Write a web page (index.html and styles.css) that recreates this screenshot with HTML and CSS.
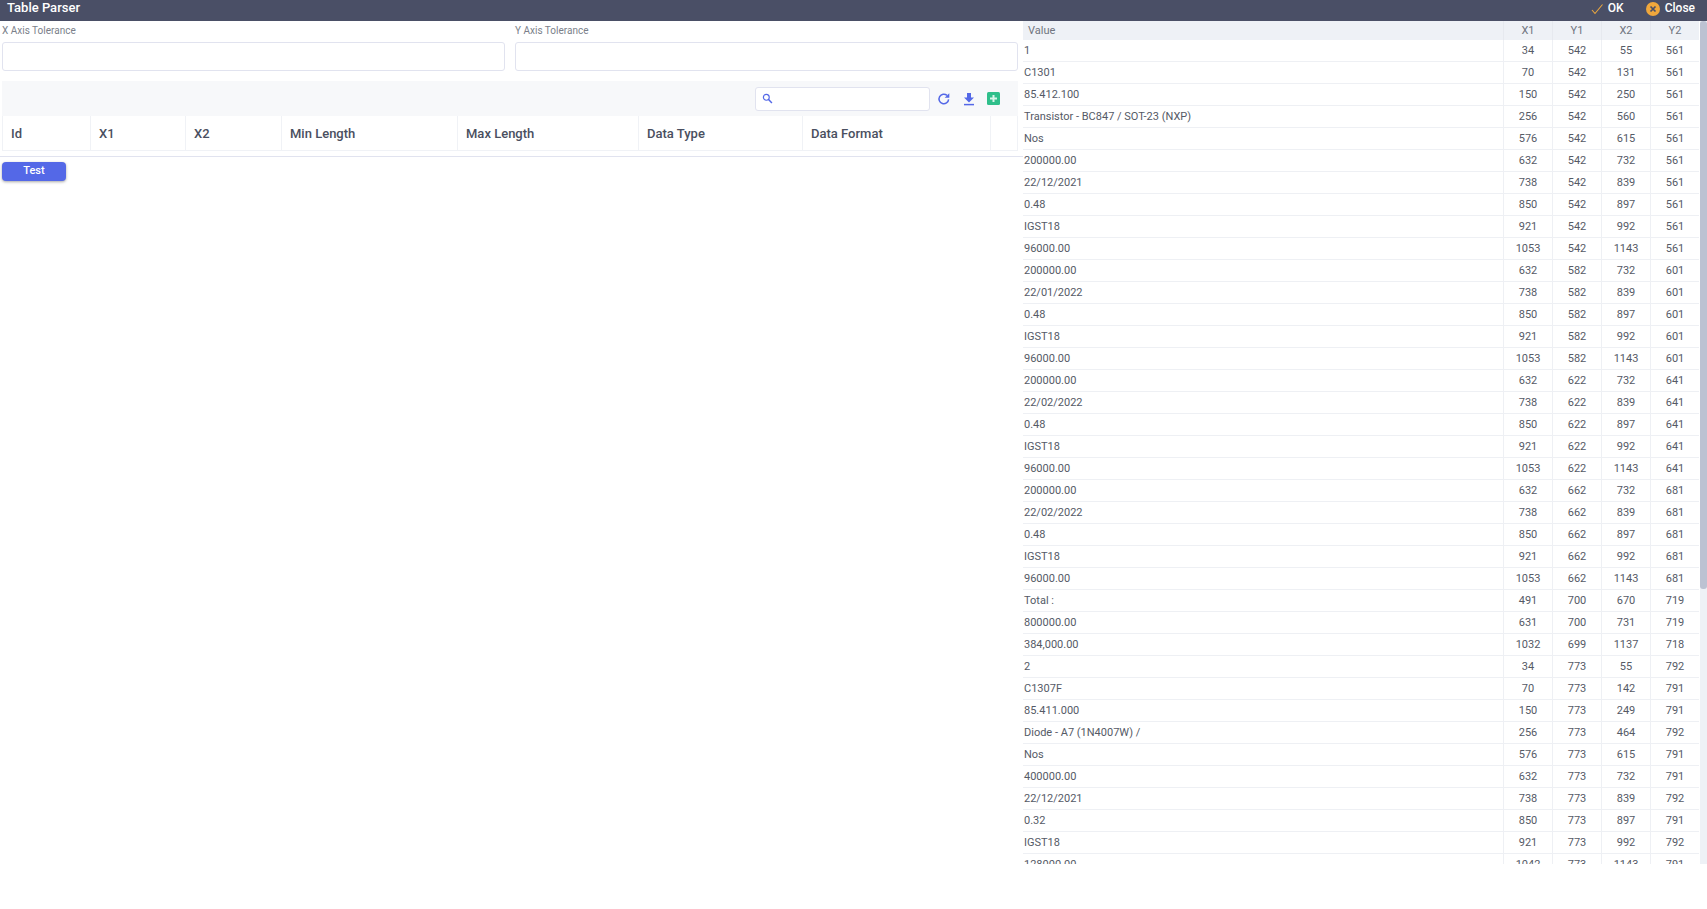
FILE: index.html
```html
<!DOCTYPE html>
<html lang="en">
<head>
<meta charset="utf-8">
<title>Table Parser</title>
<link rel="stylesheet" href="styles.css">
</head>
<body>
<div class="app">
  <header class="topbar">
    <h1 class="title">Table Parser</h1>
    <div class="actions">
      <button class="action" type="button">
        <svg class="ok-icon" viewBox="0 0 12 12" width="12" height="12"><path d="M1 7l3 3.5L11.5 1.5" fill="none" stroke="#eba73f" stroke-width="1.1"/></svg>
        <span>OK</span>
      </button>
      <button class="action" type="button">
        <svg viewBox="0 0 14 14" width="14" height="14"><circle cx="7" cy="7" r="7" fill="#f0a73c"/><path d="M4.5 4.5l5 5M9.5 4.5l-5 5" stroke="#4a4f66" stroke-width="1.7"/></svg>
        <span>Close</span>
      </button>
    </div>
  </header>
  <main class="main">
    <section class="left">
      <div class="fields">
        <label class="field"><span class="field-label">X Axis Tolerance</span><input class="field-input" type="text"></label>
        <label class="field"><span class="field-label">Y Axis Tolerance</span><input class="field-input" type="text"></label>
      </div>
      <div class="grid-wrap">
        <div class="toolbar">
          <div class="search">
            <svg viewBox="0 0 12 12" width="11" height="11"><circle cx="4.7" cy="4.7" r="3.2" fill="none" stroke="#5468e7" stroke-width="1.3"/><path d="M7.2 7.2l3.6 3.6" stroke="#5468e7" stroke-width="1.6"/></svg>
          </div>
          <svg class="tool" viewBox="0 0 14 14" width="14" height="14"><path d="M11.6 7.4A4.8 4.8 0 1 1 10 3.4" fill="none" stroke="#5468e7" stroke-width="1.5"/><path d="M12.3 1.2v4.6H7.7z" fill="#5468e7"/></svg>
          <svg class="tool" viewBox="0 0 14 14" width="14" height="14"><path d="M5 1h4v4.5h3L7 10.5 2 5.5h3z" fill="#5468e7"/><path d="M2 12.6h10" stroke="#5468e7" stroke-width="1.5"/></svg>
          <svg class="tool" viewBox="0 0 13 13" width="13" height="13"><rect width="13" height="13" rx="1.5" fill="#2fbf8b"/><path d="M6.5 3v7M3 6.5h7" stroke="#d9f5ea" stroke-width="2"/></svg>
        </div>
        <div class="grid-head">
          <div class="col">Id</div>
          <div class="col">X1</div>
          <div class="col">X2</div>
          <div class="col">Min Length</div>
          <div class="col">Max Length</div>
          <div class="col">Data Type</div>
          <div class="col">Data Format</div>
          <div class="col"></div>
        </div>
      </div>
      <div class="rule"></div>
      <button class="test" type="button">Test</button>
    </section>
    <section class="right">
      <div class="scroller">
      <table class="data">
        <thead><tr><th>Value</th><th>X1</th><th>Y1</th><th>X2</th><th>Y2</th></tr></thead>
        <tbody>
          <tr><td>1</td><td>34</td><td>542</td><td>55</td><td>561</td></tr>
          <tr><td>C1301</td><td>70</td><td>542</td><td>131</td><td>561</td></tr>
          <tr><td>85.412.100</td><td>150</td><td>542</td><td>250</td><td>561</td></tr>
          <tr><td>Transistor - BC847 / SOT-23 (NXP)</td><td>256</td><td>542</td><td>560</td><td>561</td></tr>
          <tr><td>Nos</td><td>576</td><td>542</td><td>615</td><td>561</td></tr>
          <tr><td>200000.00</td><td>632</td><td>542</td><td>732</td><td>561</td></tr>
          <tr><td>22/12/2021</td><td>738</td><td>542</td><td>839</td><td>561</td></tr>
          <tr><td>0.48</td><td>850</td><td>542</td><td>897</td><td>561</td></tr>
          <tr><td>IGST18</td><td>921</td><td>542</td><td>992</td><td>561</td></tr>
          <tr><td>96000.00</td><td>1053</td><td>542</td><td>1143</td><td>561</td></tr>
          <tr><td>200000.00</td><td>632</td><td>582</td><td>732</td><td>601</td></tr>
          <tr><td>22/01/2022</td><td>738</td><td>582</td><td>839</td><td>601</td></tr>
          <tr><td>0.48</td><td>850</td><td>582</td><td>897</td><td>601</td></tr>
          <tr><td>IGST18</td><td>921</td><td>582</td><td>992</td><td>601</td></tr>
          <tr><td>96000.00</td><td>1053</td><td>582</td><td>1143</td><td>601</td></tr>
          <tr><td>200000.00</td><td>632</td><td>622</td><td>732</td><td>641</td></tr>
          <tr><td>22/02/2022</td><td>738</td><td>622</td><td>839</td><td>641</td></tr>
          <tr><td>0.48</td><td>850</td><td>622</td><td>897</td><td>641</td></tr>
          <tr><td>IGST18</td><td>921</td><td>622</td><td>992</td><td>641</td></tr>
          <tr><td>96000.00</td><td>1053</td><td>622</td><td>1143</td><td>641</td></tr>
          <tr><td>200000.00</td><td>632</td><td>662</td><td>732</td><td>681</td></tr>
          <tr><td>22/02/2022</td><td>738</td><td>662</td><td>839</td><td>681</td></tr>
          <tr><td>0.48</td><td>850</td><td>662</td><td>897</td><td>681</td></tr>
          <tr><td>IGST18</td><td>921</td><td>662</td><td>992</td><td>681</td></tr>
          <tr><td>96000.00</td><td>1053</td><td>662</td><td>1143</td><td>681</td></tr>
          <tr><td>Total :</td><td>491</td><td>700</td><td>670</td><td>719</td></tr>
          <tr><td>800000.00</td><td>631</td><td>700</td><td>731</td><td>719</td></tr>
          <tr><td>384,000.00</td><td>1032</td><td>699</td><td>1137</td><td>718</td></tr>
          <tr><td>2</td><td>34</td><td>773</td><td>55</td><td>792</td></tr>
          <tr><td>C1307F</td><td>70</td><td>773</td><td>142</td><td>791</td></tr>
          <tr><td>85.411.000</td><td>150</td><td>773</td><td>249</td><td>791</td></tr>
          <tr><td>Diode - A7 (1N4007W) /</td><td>256</td><td>773</td><td>464</td><td>792</td></tr>
          <tr><td>Nos</td><td>576</td><td>773</td><td>615</td><td>791</td></tr>
          <tr><td>400000.00</td><td>632</td><td>773</td><td>732</td><td>791</td></tr>
          <tr><td>22/12/2021</td><td>738</td><td>773</td><td>839</td><td>792</td></tr>
          <tr><td>0.32</td><td>850</td><td>773</td><td>897</td><td>791</td></tr>
          <tr><td>IGST18</td><td>921</td><td>773</td><td>992</td><td>792</td></tr>
          <tr><td>128000.00</td><td>1042</td><td>773</td><td>1143</td><td>791</td></tr>
        </tbody>
      </table>
      </div>
      <div class="scrollbar"><div class="thumb"></div></div>
    </section>
  </main>
</div>
</body>
</html>
```

FILE: styles.css
```css
* {
  box-sizing: border-box;
}

html, body {
  margin: 0;
  padding: 0;
  height: 100%;
  background: #fff;
  overflow: hidden;
}

body {
  font-family: Roboto, "Liberation Sans", sans-serif;
  color: #4a4f60;
}

.app {
  display: flex;
  flex-direction: column;
  height: 864px;
}

.topbar {
  flex: 0 0 21px;
  display: flex;
  justify-content: space-between;
  align-items: flex-start;
  background: #4a4f66;
  color: #fff;
  padding: 0 12px 0 7px;
}

.title {
  margin: 0;
  font-size: 13px;
  font-weight: 500;
  line-height: 15px;
}

.actions {
  display: flex;
  gap: 22px;
  align-items: center;
  height: 15px;
}

.action {
  display: flex;
  align-items: center;
  gap: 5px;
  padding: 0;
  border: 0;
  background: none;
  color: #fff;
  font: 500 12px/14px Roboto, sans-serif;
}

.action svg {
  position: relative;
  top: 1px;
}

.main {
  flex: 1;
  display: flex;
  min-height: 0;
}

.left {
  flex: 0 0 1023px;
  min-width: 0;
  padding-top: 3px;
}

.fields {
  display: flex;
  gap: 10px;
  padding: 0 5px 0 2px;
}

.field {
  flex: 1;
  min-width: 0;
  display: flex;
  flex-direction: column;
}

.field-label {
  font-size: 10px;
  line-height: 14px;
  color: #7b7f8a;
  margin-bottom: 4px;
}

.field-input {
  width: 100%;
  height: 29px;
  border: 1px solid #e1e3ef;
  border-radius: 3px;
  background: #fff;
}

.grid-wrap {
  margin: 10px 5px 0 2px;
}

.toolbar {
  height: 35px;
  display: flex;
  align-items: center;
  justify-content: flex-end;
  background: #f7f8fa;
  padding-right: 18px;
}

.search {
  width: 175px;
  height: 24px;
  display: flex;
  align-items: center;
  padding-left: 6px;
  background: #fff;
  border: 1px solid #e1e3ef;
  border-radius: 3px;
}

.tool {
  margin-left: 11px;
}

.tool:first-of-type {
  margin-left: 7px;
}

.grid-head {
  display: grid;
  grid-template-columns: 88px 95px 96px 176px 181px 164px 188px 1fr;
  height: 35px;
  border: 1px solid #f0f2f6;
  border-top: 0;
  background: #fff;
}

.col {
  display: flex;
  align-items: center;
  padding-left: 8px;
  font-size: 13px;
  font-weight: 500;
  color: #4a4f60;
  border-right: 1px solid #f0f2f6;
}

.col:last-child {
  border-right: 0;
}

.rule {
  height: 1px;
  margin-top: 5px;
  background: #e1e3ef;
}

.test {
  display: block;
  width: 64px;
  height: 19px;
  margin: 5px 0 0 2px;
  padding: 0 0 2px;
  border: 0;
  border-radius: 4px;
  background: #5468e7;
  color: #fff;
  font: 500 11px/13px Roboto, sans-serif;
  box-shadow: 0 1px 3px rgba(0, 0, 0, 0.35);
}

.right {
  flex: 1;
  min-width: 0;
  position: relative;
  overflow: hidden;
}

.scroller {
  height: 100%;
  overflow-y: auto;
  scrollbar-width: none;
}

.scrollbar {
  position: absolute;
  top: 0;
  right: 0;
  bottom: 0;
  width: 7px;
  background: #eef1f6;
}

.thumb {
  height: 568px;
  background: #bcc2d2;
  border-radius: 3px;
}

.data {
  width: 676px;
  border-collapse: separate;
  border-spacing: 0;
  table-layout: fixed;
  font-size: 11px;
}

.data th {
  position: sticky;
  top: 0;
  height: 19px;
  padding: 0;
  width: 49px;
  background: #eef1f6;
  color: #70757f;
  font-weight: 400;
  line-height: 14px;
  text-align: center;
  border-left: 1px solid #e6e9ef;
}

.data th:first-child {
  width: auto;
  padding-left: 5px;
  text-align: left;
  border-left: 0;
}

.data td {
  height: 22px;
  padding: 0;
  line-height: 14px;
  text-align: center;
  color: #555a66;
  border-bottom: 1px solid #eef0f4;
  border-left: 1px solid #eef0f4;
}

.data td:first-child {
  padding-left: 1px;
  text-align: left;
  border-left: 0;
}
```
